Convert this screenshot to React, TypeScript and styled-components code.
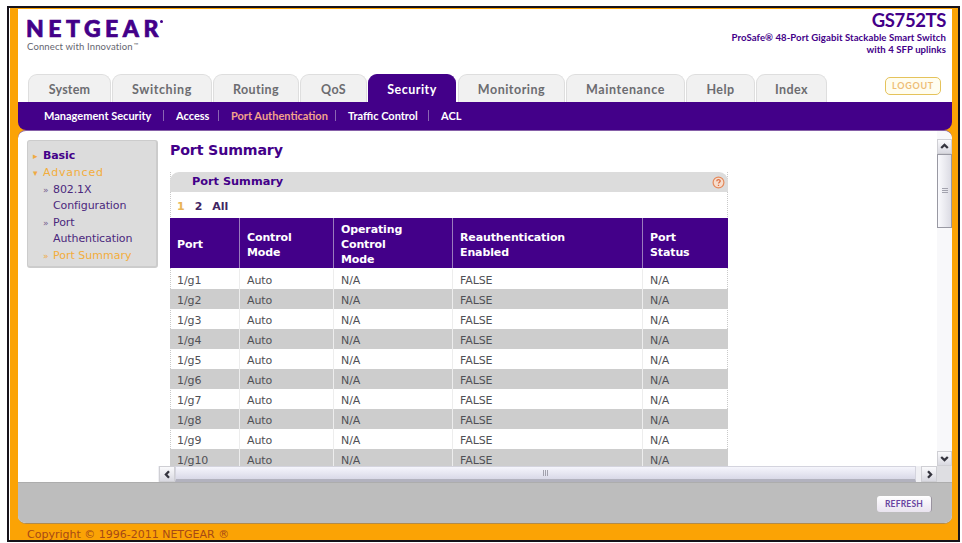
import styled, { createGlobalStyle } from 'styled-components'

interface NavItem {
  label: string
  width: number
  gap: number
  spacing: number
  active?: boolean
}

const tabs: NavItem[] = [
  { label: 'System', width: 83, gap: 1, spacing: 0.2 },
  { label: 'Switching', width: 100, gap: 1, spacing: 0.6 },
  { label: 'Routing', width: 86, gap: 1, spacing: 0.4 },
  { label: 'QoS', width: 67, gap: 1, spacing: 0.3 },
  { label: 'Security', width: 88, gap: 2, spacing: 0.5, active: true },
  { label: 'Monitoring', width: 107, gap: 1, spacing: 0.5 },
  { label: 'Maintenance', width: 119, gap: 1, spacing: 0.6 },
  { label: 'Help', width: 69, gap: 1, spacing: 0.4 },
  { label: 'Index', width: 71, gap: 0, spacing: 0.4 },
]

const subLinks = [
  { label: 'Management Security', width: 132 },
  { label: 'Access', width: 55 },
  { label: 'Port Authentication', width: 117 },
  { label: 'Traffic Control', width: 93 },
  { label: 'ACL', width: 40 },
]

const columns = [
  { lines: ['Port'], key: 'port' },
  { lines: ['Control', 'Mode'], key: 'control' },
  { lines: ['Operating', 'Control', 'Mode'], key: 'operating' },
  { lines: ['Reauthentication', 'Enabled'], key: 'reauth' },
  { lines: ['Port', 'Status'], key: 'status' },
]

const ports = Array.from({ length: 10 }, (_, i) => `1/g${i + 1}`)

const Chevron = ({ rotate = 0 }: { rotate?: number }) => (
  <svg width="9" height="9" viewBox="0 0 9 9">
    <path
      d="M1.2 6L4.5 2.9L7.8 6"
      fill="none"
      stroke="#34343e"
      strokeWidth="2.3"
      transform={`rotate(${rotate} 4.5 4.5)`}
    />
  </svg>
)

const App = () => (
  <>
    <GlobalStyle />
    <Frame>
      <Header>
        <div>
          <Logo>
            NETGEAR<Dot />
          </Logo>
          <Tagline>
            Connect with Innovation
            <Mark>™</Mark>
          </Tagline>
        </div>
        <Product>
          <Model>GS752TS</Model>
          <Description>
            ProSafe® 48-Port Gigabit Stackable Smart Switch
            <br />
            with 4 SFP uplinks
          </Description>
        </Product>
      </Header>

      <TabBar>
        {tabs.map((tab) => (
          <Tab
            key={tab.label}
            $width={tab.width}
            $gap={tab.gap}
            $spacing={tab.spacing}
            $active={tab.active}
          >
            {tab.label}
          </Tab>
        ))}
        <Logout>LOGOUT</Logout>
      </TabBar>

      <SubNavCorner>
        <SubNav>
          {subLinks.map((link) => (
            <SubLink
              key={link.label}
              $width={link.width}
              $active={link.label === 'Port Authentication'}
            >
              {link.label}
            </SubLink>
          ))}
        </SubNav>
      </SubNavCorner>

      <Panel>
        <Body>
          <SideColumn>
            <Sidebar>
              <MenuItem $bold>
                <Arrow $active>▸</Arrow>Basic
              </MenuItem>
              <MenuItem $active $wide>
                <Arrow $active>▾</Arrow>Advanced
              </MenuItem>
              <SubItem>
                <Arrow>»</Arrow>
                <span>
                  802.1X
                  <br />
                  Configuration
                </span>
              </SubItem>
              <SubItem>
                <Arrow>»</Arrow>
                <span>
                  Port
                  <br />
                  Authentication
                </span>
              </SubItem>
              <SubItem $active>
                <Arrow $active>»</Arrow>
                <span>Port Summary</span>
              </SubItem>
            </Sidebar>
          </SideColumn>

          <ScrollArea>
            <Content>
              <PageTitle>Port Summary</PageTitle>
              <Section>
                <SectionHeader>
                  Port Summary
                  <svg width="13" height="13" viewBox="0 0 13 13">
                    <circle cx="6.5" cy="6.5" r="5.4" fill="#f6ddcd" stroke="#e58a5c" strokeWidth="1.2" />
                    <path
                      d="M4.8 5.2C4.8 3 8.2 3.1 8.2 5C8.2 6.2 6.5 6.3 6.5 7.6M6.5 8.8V10"
                      fill="none"
                      stroke="#dd6f43"
                      strokeWidth="1.3"
                    />
                  </svg>
                </SectionHeader>
                <Pager>
                  <Page $active>1</Page>
                  <Page>2</Page>
                  <Page>All</Page>
                </Pager>
                <Row $head>
                  {columns.map((column) => (
                    <HeadCell key={column.key}>
                      {column.lines.map((line) => (
                        <span key={line}>{line}</span>
                      ))}
                    </HeadCell>
                  ))}
                </Row>
                {ports.map((port, i) => (
                  <Row key={port} $striped={i % 2 === 1}>
                    <Cell>{port}</Cell>
                    <Cell>Auto</Cell>
                    <Cell>N/A</Cell>
                    <Cell>FALSE</Cell>
                    <Cell>N/A</Cell>
                  </Row>
                ))}
              </Section>
            </Content>

            <VerticalScroll>
              <ScrollButton $size={15}>
                <Chevron />
              </ScrollButton>
              <VerticalThumb>
                <Grip />
              </VerticalThumb>
              <ScrollButton $size={15}>
                <Chevron rotate={180} />
              </ScrollButton>
            </VerticalScroll>

            <HorizontalScroll>
              <ScrollButton $size={16}>
                <Chevron rotate={-90} />
              </ScrollButton>
              <HorizontalThumb>
                <Grip $vertical />
              </HorizontalThumb>
              <ScrollButton $size={16}>
                <Chevron rotate={90} />
              </ScrollButton>
            </HorizontalScroll>
            <ScrollCorner />
          </ScrollArea>
        </Body>
        <ActionBar>
          <Refresh>REFRESH</Refresh>
        </ActionBar>
      </Panel>
      <Copyright>Copyright © 1996-2011 NETGEAR ®</Copyright>
    </Frame>
  </>
)

const purple = '#430089'
const orange = '#fba305'
const futura = "Lato, 'Open Sans', sans-serif"
const verdana = "'DejaVu Sans', sans-serif"

const GlobalStyle = createGlobalStyle`
  * {
    box-sizing: border-box;
  }

  body {
    margin: 0;
    overflow: hidden;
    background: #fff;
    font-family: ${verdana};
    font-size: 11px;
    white-space: nowrap;
  }

  button {
    padding: 0;
  }
`

const Frame = styled.div`
  display: flex;
  flex-direction: column;
  width: 953px;
  height: 536px;
  margin: 6px 0 0 7px;
  padding: 1px 6px 0 9px;
  border: 2px solid #17131a;
  background: linear-gradient(90deg, #fff 1px, ${orange} 1px);
  overflow: hidden;
`

const Header = styled.header`
  display: flex;
  justify-content: space-between;
  flex: 0 0 65px;
  padding: 0 6px 0 9px;
  background: #fff;
`

const Logo = styled.div`
  display: flex;
  margin: 7px 0 1px -1px;
  color: ${purple};
  font: 900 23px/24px ${futura};
  letter-spacing: 4.5px;
  -webkit-text-stroke: 0.7px ${purple};
`

const Dot = styled.span`
  width: 3px;
  height: 3px;
  margin: 4px 0 0 -3px;
  border-radius: 50%;
  background: ${purple};
`

const Tagline = styled.div`
  display: flex;
  gap: 1px;
  color: #65656f;
  font: 9.5px/12px ${futura};
  letter-spacing: 0.13px;
`

const Mark = styled.span`
  font-size: 6px;
  line-height: 7px;
`

const Product = styled.div`
  color: ${purple};
  text-align: right;
`

const Model = styled.div`
  font: 700 18.5px/22px ${futura};
  letter-spacing: -0.4px;
`

const Description = styled.div`
  margin-top: 1px;
  font: 700 9.6px/12px ${futura};
  letter-spacing: 0.06px;
`

const TabBar = styled.nav`
  display: flex;
  flex: 0 0 28px;
  padding-left: 10px;
  background: #fff;
`

const Tab = styled.div<{
  $width: number
  $gap: number
  $spacing: number
  $active?: boolean
}>`
  flex: 0 0 ${({ $width }) => $width}px;
  height: 28px;
  margin-right: ${({ $gap }) => $gap}px;
  border: 1px solid ${({ $active }) => ($active ? purple : '#dedede')};
  border-bottom: 0;
  border-radius: 9px 9px 0 0;
  background: ${({ $active }) => ($active ? purple : '#f1f1f1')};
  color: ${({ $active }) => ($active ? '#fff' : '#6c6c70')};
  font: 700 12.5px/29px ${futura};
  letter-spacing: ${({ $spacing }) => $spacing}px;
  text-align: center;
`

const Logout = styled.button`
  width: 56px;
  height: 18px;
  margin: 3px 11px 0 auto;
  border: 1px solid #e5c35b;
  border-radius: 5px;
  background: #fffdf0;
  color: #eebd77;
  font: 700 9px/16px ${futura};
  letter-spacing: 0.7px;
`

const SubNavCorner = styled.div`
  flex: 0 0 28px;
  background: ${orange};
`

const SubNav = styled.div`
  display: flex;
  align-items: center;
  height: 28px;
  padding: 0 0 1px 26px;
  border-radius: 0 0 8px 8px;
  background: ${purple};
`

const SubLink = styled.span<{ $width: number; $active: boolean }>`
  display: flex;
  justify-content: space-between;
  width: ${({ $width }) => $width}px;
  color: ${({ $active }) => ($active ? '#f3a38b' : '#fff')};
  font: 700 11px/14px ${futura};

  &:not(:last-child)::after {
    content: '';
    width: 1px;
    height: 11px;
    margin: 1px 12px 0 0;
    background: #8b65b3;
  }
`

const Panel = styled.main`
  display: flex;
  flex-direction: column;
  flex: 0 0 394px;
  border-top: 1px solid #8660a8;
  border-bottom: 1px solid #b18b4d;
  border-radius: 8px;
  background: #fff;
  overflow: hidden;
`

const Body = styled.div`
  display: flex;
  flex: 0 0 351px;
`

const SideColumn = styled.div`
  flex: 0 0 139px;
  padding: 9px 0 0 9px;
`

const Sidebar = styled.aside`
  width: 131px;
  height: 128px;
  padding: 7px 0 0 5px;
  border: 1px solid #ccc;
  border-width: 1px 2px 2px 1px;
  border-radius: 3px;
  background: #dcdcdc;
  color: ${purple};
  line-height: 16px;
`

const MenuItem = styled.div<{
  $bold?: boolean
  $active?: boolean
  $wide?: boolean
}>`
  display: flex;
  height: 17px;
  color: ${({ $active }) => ($active ? '#f3ad3b' : purple)};
  font-weight: ${({ $bold }) => ($bold ? 700 : 400)};
  font-size: 11px;
  letter-spacing: ${({ $wide }) => ($wide ? 0.8 : -0.1)}px;
`

const SubItem = styled.div<{ $active?: boolean }>`
  display: flex;
  margin: 0 0 1px 10px;
  color: ${({ $active }) => ($active ? '#f3ad3b' : '#4b287c')};
  letter-spacing: ${({ $active }) => ($active ? 0 : -0.1)}px;
`

const Arrow = styled.span<{ $active?: boolean }>`
  flex: 0 0 10px;
  color: ${({ $active }) => ($active ? '#efaa45' : '#76608f')};
  font-size: 9px;
`

const ScrollArea = styled.section`
  display: grid;
  grid-template: 335px 16px / 779px 15px;
`

const Content = styled.div`
  padding: 9px 0 0 13px;
  overflow: hidden;
`

const PageTitle = styled.h1`
  margin: 0 0 0 -1px;
  height: 32px;
  color: ${purple};
  font: 700 14.2px/20px ${verdana};
  letter-spacing: -0.15px;
`

const Section = styled.div`
  width: 558px;
  margin-left: -1px;
  border: 1px dotted #c9c9c9;
  border-width: 0 1px;
`

const SectionHeader = styled.h2`
  display: flex;
  align-items: center;
  justify-content: space-between;
  height: 20px;
  margin: 0 -1px;
  padding: 0 3px 0 22px;
  border-radius: 9px 9px 0 0;
  background: #dcdcdc;
  color: ${purple};
  font: 700 11.3px/20px ${verdana};
`

const Pager = styled.div`
  display: flex;
  gap: 10px;
  height: 26px;
  padding: 1px 0 0 6px;
  line-height: 27px;
  font-weight: 700;
`

const Page = styled.span<{ $active?: boolean }>`
  color: ${({ $active }) => ($active ? '#e9b456' : '#3f2462')};
`

const Row = styled.div<{ $head?: boolean; $striped?: boolean }>`
  display: grid;
  grid-template-columns: 70px 94px 119px 190px 85px;
  height: ${({ $head }) => ($head ? 50 : 20)}px;
  margin: 0 -1px ${({ $head }) => ($head ? 1 : 0)}px;
  background: ${({ $head, $striped }) =>
    $head ? purple : $striped ? '#cdcdcd' : 'transparent'};
`

const HeadCell = styled.div`
  display: flex;
  flex-direction: column;
  justify-content: center;
  padding: 3px 0 0 7px;
  border-right: 1px solid #9a7bbd;
  color: #fff;
  font-weight: 700;
  line-height: 15px;
  letter-spacing: -0.12px;

  &:last-child {
    border-right: 0;
  }
`

const Cell = styled.div`
  height: 20px;
  padding-left: 7px;
  border-right: 1px solid #ededed;
  color: #505055;
  line-height: 23px;
  letter-spacing: -0.1px;

  &:last-child {
    border-right: 0;
  }
`

const VerticalScroll = styled.div`
  display: flex;
  flex-direction: column;
  padding-top: 8px;
  background: #f8f8fa;
`

const ScrollButton = styled.div<{ $size: number }>`
  display: flex;
  align-items: center;
  justify-content: center;
  flex: 0 0 ${({ $size }) => $size}px;
  border: 1px solid #cfcfd4;
  background: linear-gradient(#fafafc, #d9d9e1);
`

const VerticalThumb = styled.div`
  display: flex;
  align-items: center;
  justify-content: center;
  height: 74px;
  margin-bottom: auto;
  border: 1px solid #9999a3;
  background: linear-gradient(90deg, #fafafd, #dcdce4);
`

const HorizontalScroll = styled.div`
  display: flex;
  justify-content: space-between;
  padding-left: 1px;
  background: #f0f0f4;
`

const HorizontalThumb = styled.div`
  display: flex;
  align-items: center;
  justify-content: center;
  width: 741px;
  margin-right: auto;
  border: 1px solid #d4d4de;
  border-bottom: 3px solid #b2b2be;
  background: linear-gradient(#f5f5fc, #d9d9e7);
`

const Grip = styled.span<{ $vertical?: boolean }>`
  width: 6px;
  height: 6px;
  background: repeating-linear-gradient(
    ${({ $vertical }) => ($vertical ? '90deg' : '180deg')},
    #a2a2ad 0 1px,
    transparent 1px 2px
  );
`

const ScrollCorner = styled.div`
  background: #dedee2;
`

const ActionBar = styled.footer`
  display: flex;
  justify-content: flex-end;
  flex: 1;
  padding: 13px 20px 0 0;
  border-top: 1px solid #adadad;
  background: #bdbdbd;
`

const Refresh = styled.button`
  width: 55px;
  height: 16px;
  border: 0;
  border-right: 1px solid #99939f;
  border-radius: 3px;
  background: linear-gradient(#fff, #e9e3ef);
  color: #6745a0;
  font: 700 8.5px/16px ${futura};
  letter-spacing: 0.2px;
`

const Copyright = styled.div`
  flex: none;
  margin: 5px 0 0 9px;
  color: #a64916;
  font-size: 11px;
  line-height: 12px;
`

export default App
